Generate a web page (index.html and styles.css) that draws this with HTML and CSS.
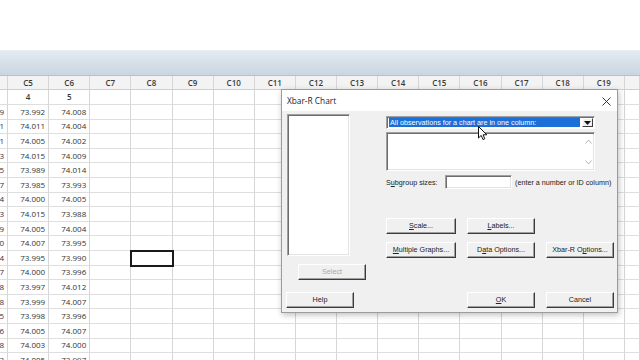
FILE: index.html
```html
<!DOCTYPE html>
<html>
<head>
<meta charset="utf-8">
<link rel="stylesheet" href="styles.css">
</head>
<body>
<div class="app">
  <div class="topspace"></div>
  <div class="toolbar"></div>
  <div class="sheet">
    <div class="row head"><div class="c c4"></div><div class="c">C5</div><div class="c">C6</div><div class="c">C7</div><div class="c">C8</div><div class="c">C9</div><div class="c">C10</div><div class="c">C11</div><div class="c">C12</div><div class="c">C13</div><div class="c">C14</div><div class="c">C15</div><div class="c">C16</div><div class="c">C17</div><div class="c">C18</div><div class="c">C19</div><div class="c"></div></div>
    <div class="row names"><div class="c c4"></div><div class="c">4</div><div class="c">5</div><div class="c"></div><div class="c"></div><div class="c"></div><div class="c"></div><div class="c"></div><div class="c"></div><div class="c"></div><div class="c"></div><div class="c"></div><div class="c"></div><div class="c"></div><div class="c"></div><div class="c"></div><div class="c"></div></div>
    <div class="row"><div class="c c4">9</div><div class="c">73.992</div><div class="c">74.008</div><div class="c"></div><div class="c"></div><div class="c"></div><div class="c"></div><div class="c"></div><div class="c"></div><div class="c"></div><div class="c"></div><div class="c"></div><div class="c"></div><div class="c"></div><div class="c"></div><div class="c"></div><div class="c"></div></div>
    <div class="row"><div class="c c4">1</div><div class="c">74.011</div><div class="c">74.004</div><div class="c"></div><div class="c"></div><div class="c"></div><div class="c"></div><div class="c"></div><div class="c"></div><div class="c"></div><div class="c"></div><div class="c"></div><div class="c"></div><div class="c"></div><div class="c"></div><div class="c"></div><div class="c"></div></div>
    <div class="row"><div class="c c4">1</div><div class="c">74.005</div><div class="c">74.002</div><div class="c"></div><div class="c"></div><div class="c"></div><div class="c"></div><div class="c"></div><div class="c"></div><div class="c"></div><div class="c"></div><div class="c"></div><div class="c"></div><div class="c"></div><div class="c"></div><div class="c"></div><div class="c"></div></div>
    <div class="row"><div class="c c4">3</div><div class="c">74.015</div><div class="c">74.009</div><div class="c"></div><div class="c"></div><div class="c"></div><div class="c"></div><div class="c"></div><div class="c"></div><div class="c"></div><div class="c"></div><div class="c"></div><div class="c"></div><div class="c"></div><div class="c"></div><div class="c"></div><div class="c"></div></div>
    <div class="row"><div class="c c4">5</div><div class="c">73.989</div><div class="c">74.014</div><div class="c"></div><div class="c"></div><div class="c"></div><div class="c"></div><div class="c"></div><div class="c"></div><div class="c"></div><div class="c"></div><div class="c"></div><div class="c"></div><div class="c"></div><div class="c"></div><div class="c"></div><div class="c"></div></div>
    <div class="row"><div class="c c4">7</div><div class="c">73.985</div><div class="c">73.993</div><div class="c"></div><div class="c"></div><div class="c"></div><div class="c"></div><div class="c"></div><div class="c"></div><div class="c"></div><div class="c"></div><div class="c"></div><div class="c"></div><div class="c"></div><div class="c"></div><div class="c"></div><div class="c"></div></div>
    <div class="row"><div class="c c4">4</div><div class="c">74.000</div><div class="c">74.005</div><div class="c"></div><div class="c"></div><div class="c"></div><div class="c"></div><div class="c"></div><div class="c"></div><div class="c"></div><div class="c"></div><div class="c"></div><div class="c"></div><div class="c"></div><div class="c"></div><div class="c"></div><div class="c"></div></div>
    <div class="row"><div class="c c4">3</div><div class="c">74.015</div><div class="c">73.988</div><div class="c"></div><div class="c"></div><div class="c"></div><div class="c"></div><div class="c"></div><div class="c"></div><div class="c"></div><div class="c"></div><div class="c"></div><div class="c"></div><div class="c"></div><div class="c"></div><div class="c"></div><div class="c"></div></div>
    <div class="row"><div class="c c4">9</div><div class="c">74.005</div><div class="c">74.004</div><div class="c"></div><div class="c"></div><div class="c"></div><div class="c"></div><div class="c"></div><div class="c"></div><div class="c"></div><div class="c"></div><div class="c"></div><div class="c"></div><div class="c"></div><div class="c"></div><div class="c"></div><div class="c"></div></div>
    <div class="row"><div class="c c4">0</div><div class="c">74.007</div><div class="c">73.995</div><div class="c"></div><div class="c"></div><div class="c"></div><div class="c"></div><div class="c"></div><div class="c"></div><div class="c"></div><div class="c"></div><div class="c"></div><div class="c"></div><div class="c"></div><div class="c"></div><div class="c"></div><div class="c"></div></div>
    <div class="row"><div class="c c4">4</div><div class="c">73.995</div><div class="c">73.990</div><div class="c"></div><div class="c sel"></div><div class="c"></div><div class="c"></div><div class="c"></div><div class="c"></div><div class="c"></div><div class="c"></div><div class="c"></div><div class="c"></div><div class="c"></div><div class="c"></div><div class="c"></div><div class="c"></div></div>
    <div class="row"><div class="c c4">7</div><div class="c">74.000</div><div class="c">73.996</div><div class="c"></div><div class="c"></div><div class="c"></div><div class="c"></div><div class="c"></div><div class="c"></div><div class="c"></div><div class="c"></div><div class="c"></div><div class="c"></div><div class="c"></div><div class="c"></div><div class="c"></div><div class="c"></div></div>
    <div class="row"><div class="c c4">8</div><div class="c">73.997</div><div class="c">74.012</div><div class="c"></div><div class="c"></div><div class="c"></div><div class="c"></div><div class="c"></div><div class="c"></div><div class="c"></div><div class="c"></div><div class="c"></div><div class="c"></div><div class="c"></div><div class="c"></div><div class="c"></div><div class="c"></div></div>
    <div class="row"><div class="c c4">8</div><div class="c">73.999</div><div class="c">74.007</div><div class="c"></div><div class="c"></div><div class="c"></div><div class="c"></div><div class="c"></div><div class="c"></div><div class="c"></div><div class="c"></div><div class="c"></div><div class="c"></div><div class="c"></div><div class="c"></div><div class="c"></div><div class="c"></div></div>
    <div class="row"><div class="c c4">5</div><div class="c">73.998</div><div class="c">73.996</div><div class="c"></div><div class="c"></div><div class="c"></div><div class="c"></div><div class="c"></div><div class="c"></div><div class="c"></div><div class="c"></div><div class="c"></div><div class="c"></div><div class="c"></div><div class="c"></div><div class="c"></div><div class="c"></div></div>
    <div class="row"><div class="c c4">6</div><div class="c">74.005</div><div class="c">74.007</div><div class="c"></div><div class="c"></div><div class="c"></div><div class="c"></div><div class="c"></div><div class="c"></div><div class="c"></div><div class="c"></div><div class="c"></div><div class="c"></div><div class="c"></div><div class="c"></div><div class="c"></div><div class="c"></div></div>
    <div class="row"><div class="c c4">8</div><div class="c">74.003</div><div class="c">74.000</div><div class="c"></div><div class="c"></div><div class="c"></div><div class="c"></div><div class="c"></div><div class="c"></div><div class="c"></div><div class="c"></div><div class="c"></div><div class="c"></div><div class="c"></div><div class="c"></div><div class="c"></div><div class="c"></div></div>
    <div class="row"><div class="c c4">3</div><div class="c">74.005</div><div class="c">73.997</div><div class="c"></div><div class="c"></div><div class="c"></div><div class="c"></div><div class="c"></div><div class="c"></div><div class="c"></div><div class="c"></div><div class="c"></div><div class="c"></div><div class="c"></div><div class="c"></div><div class="c"></div><div class="c"></div></div>
  </div>
</div>

<div class="dialog">
  <div class="titlebar">
    <span class="title">Xbar-R Chart</span>
    <svg class="close" width="9" height="9" viewBox="0 0 9 9"><path d="M0.5 0.5 L8.5 8.5 M8.5 0.5 L0.5 8.5" stroke="#333" stroke-width="1" fill="none"/></svg>
  </div>
  <div class="dbody">
    <div class="leftcol">
      <div class="listbox"></div>
      <button class="btn btn-select" disabled>Select</button>
      <button class="btn btn-help">Help</button>
    </div>
    <div class="rightcol">
      <div class="combo">
        <span class="combo-text">All observations for a chart are in one column:</span>
        <span class="combo-arrow"><svg width="7" height="4" viewBox="0 0 7 4"><path d="M0 0 H7 L3.5 4 Z" fill="#111"/></svg></span>
      </div>
      <div class="textbox">
        <span class="scroll">
          <svg width="7" height="5" viewBox="0 0 7 5"><path d="M0.5 4.5 L3.5 1 L6.5 4.5" stroke="#b5b5b5" fill="none"/></svg>
          <svg width="7" height="5" viewBox="0 0 7 5"><path d="M0.5 0.5 L3.5 4 L6.5 0.5" stroke="#b5b5b5" fill="none"/></svg>
        </span>
      </div>
      <div class="subgroup">
        <span class="lbl">S<u>u</u>bgroup sizes:</span>
        <span class="input"></span>
        <span class="hint">(enter a number or ID column)</span>
      </div>
      <div class="btnrow r1">
        <button class="btn"><u>S</u>cale...</button>
        <button class="btn"><u>L</u>abels...</button>
      </div>
      <div class="btnrow r2">
        <button class="btn"><u>M</u>ultiple Graphs...</button>
        <button class="btn">D<u>a</u>ta Options...</button>
        <button class="btn">Xbar-R O<u>p</u>tions...</button>
      </div>
      <div class="btnrow r3">
        <span></span>
        <button class="btn"><u>O</u>K</button>
        <button class="btn">Cancel</button>
      </div>
    </div>
  </div>
</div>

<svg class="cursor" width="10" height="15" viewBox="0 0 10 15"><path d="M0.5 0.5 V12 L3.2 9.4 L5 13.6 L6.8 12.8 L5.1 8.8 H8.8 Z" fill="#fff" stroke="#111" stroke-width="1" stroke-linejoin="round"/></svg>
</body>
</html>
```

FILE: styles.css
```css
html, body {
  margin: 0;
  padding: 0;
  width: 640px;
  height: 360px;
  overflow: hidden;
  background: #fff;
}
.app {
  display: flex;
  flex-direction: column;
  width: 640px;
  height: 360px;
  overflow: hidden;
}
.topspace {
  height: 50px;
  flex: none;
  background: #fff;
}
.toolbar {
  height: 24px;
  flex: none;
  border-top: 1px solid #e9eef3;
  background: linear-gradient(#e3eaf1, #c9d5e1);
}
.sheet {
  flex: 1;
  overflow: hidden;
  font-family: "Open Sans", "Noto Sans", sans-serif;
  font-size: 8px;
  color: #333;
  border-top: 1px solid #b8c2cc;
}
.row {
  display: grid;
  grid-template-columns: 8px repeat(15, 41.13px) 1fr;
  height: 14.6px;
}
.row.head {
  height: 14px;
  background: #f3f3f3;
}
.row.names {
  height: 15px;
}
.c {
  box-sizing: border-box;
  border-right: 1px solid #d6d6d6;
  border-bottom: 1px solid #dedede;
  display: flex;
  align-items: center;
  justify-content: flex-end;
  padding-right: 3px;
  overflow: hidden;
  white-space: nowrap;
  line-height: 1;
}
.head .c, .names .c {
  justify-content: center;
  padding-right: 0;
  font-weight: 600;
  color: #3a3a3a;
}
.head .c {
  border-bottom-color: #cfcfcf;
}
.c4 {
  justify-content: flex-end;
}
.head .c4, .names .c4 {
  justify-content: flex-end;
}
.sel {
  position: relative;
  outline: 2px solid #1a1a1a;
  outline-offset: -1px;
}
.sel::after {
  content: "";
  position: absolute;
  right: -3px;
  bottom: -3px;
  width: 3px;
  height: 3px;
  background: #1a1a1a;
}

/* dialog */
.dialog {
  position: absolute;
  left: 281px;
  top: 89px;
  width: 337px;
  height: 224px;
  box-sizing: border-box;
  border: 1px solid #9c9c9c;
  background: #f0f0f0;
  box-shadow: 1px 2px 6px rgba(0, 0, 0, 0.25);
  display: flex;
  flex-direction: column;
  font-family: "Liberation Sans", Arial, sans-serif;
  font-size: 7.2px;
  color: #222;
}
.titlebar {
  height: 21px;
  flex: none;
  background: #fff;
  display: flex;
  align-items: center;
  justify-content: space-between;
  padding: 0 6px 0 5px;
}
.title {
  font-family: "Open Sans", "Noto Sans", sans-serif;
  font-size: 8.3px;
  color: #222;
}
.close {
  display: block;
  margin-top: 1px;
}
.dbody {
  flex: 1;
  display: flex;
}
.leftcol {
  width: 103px;
  flex: none;
  display: flex;
  flex-direction: column;
  align-items: flex-start;
  padding-left: 4px;
  box-sizing: border-box;
}
.listbox {
  margin-top: 3px;
  margin-left: 1px;
  width: 63px;
  height: 142px;
  box-sizing: border-box;
  background: #fff;
  border: 1px solid;
  border-color: #a0a0a0 #fff #fff #a0a0a0;
  box-shadow: inset 1px 1px #6d6d6d, inset -1px -1px #e3e3e3;
}
.btn {
  font: inherit;
  color: #222;
  height: 16px;
  box-sizing: border-box;
  padding: 0;
  margin: 0;
  background: #f0f0f0;
  border: 1px solid;
  border-color: #fff #3c3c3c #3c3c3c #fff;
  box-shadow: inset -1px -1px #a0a0a0;
  white-space: nowrap;
  line-height: 1;
}
.btn u {
  text-decoration-thickness: 1px;
}
.btn-select {
  margin-top: 8px;
  margin-left: 12px;
  width: 68px;
  color: #a8a8a8;
}
.btn-help {
  margin-top: 12px;
  width: 68px;
}
.rightcol {
  flex: 1;
  display: flex;
  flex-direction: column;
  padding-left: 1px;
}
.combo {
  margin-top: 5px;
  width: 209px;
  height: 13px;
  box-sizing: border-box;
  background: #fff;
  border: 1px solid;
  border-color: #a0a0a0 #fff #fff #a0a0a0;
  box-shadow: inset 1px 1px #6d6d6d;
  display: flex;
  padding: 1px 1px 1px 2px;
}
.combo-text {
  flex: 1;
  background: #1a6fd8;
  color: #fff;
  display: flex;
  align-items: center;
  padding-left: 1px;
  white-space: nowrap;
  overflow: hidden;
  margin-right: 2px;
}
.combo-arrow {
  width: 11px;
  flex: none;
  box-sizing: border-box;
  background: #f0f0f0;
  border: 1px solid;
  border-color: #fff #3c3c3c #3c3c3c #fff;
  display: flex;
  align-items: center;
  justify-content: center;
}
.combo-arrow svg {
  display: block;
}
.textbox {
  margin-top: 3px;
  width: 209px;
  height: 39px;
  box-sizing: border-box;
  background: #fff;
  border: 1px solid;
  border-color: #a0a0a0 #fff #fff #a0a0a0;
  box-shadow: inset 1px 1px #6d6d6d, inset -1px -1px #e3e3e3;
  display: flex;
  justify-content: flex-end;
}
.scroll {
  width: 12px;
  display: flex;
  flex-direction: column;
  justify-content: space-between;
  align-items: center;
  padding: 6px 0 5px;
}
.scroll svg {
  display: block;
}
.subgroup {
  margin-top: 4px;
  height: 14px;
  display: flex;
  align-items: center;
  white-space: nowrap;
}
.lbl {
  width: 59px;
  flex: none;
}
.input {
  width: 67px;
  height: 14px;
  flex: none;
  box-sizing: border-box;
  background: #fff;
  border: 1px solid;
  border-color: #a0a0a0 #fff #fff #a0a0a0;
  box-shadow: inset 1px 1px #6d6d6d, inset -1px -1px #e3e3e3;
}
.hint {
  margin-left: 3px;
}
.btnrow {
  display: grid;
  grid-template-columns: 70px 68px 68px;
  column-gap: 11px;
}
.r1 {
  margin-top: 29px;
}
.r2 {
  margin-top: 8px;
}
.r3 {
  margin-top: 34px;
}
.cursor {
  position: absolute;
  left: 478px;
  top: 126px;
}
```
